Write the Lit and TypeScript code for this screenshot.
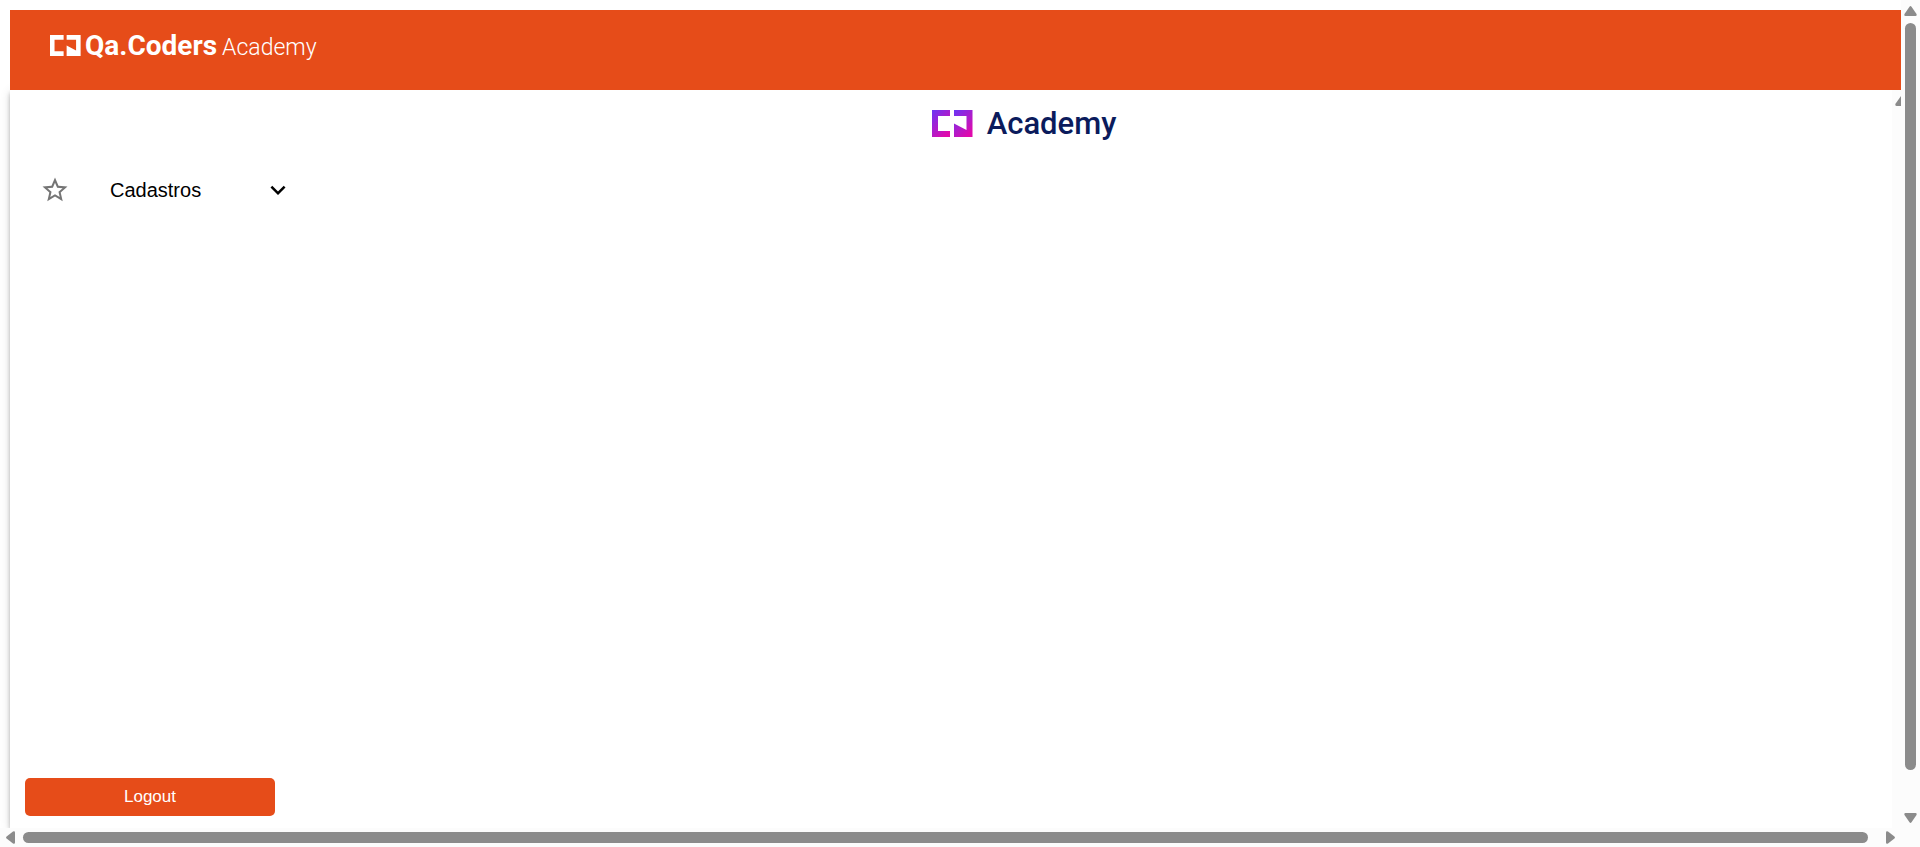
import { LitElement, html, css } from "lit";
import { customElement, state } from "lit/decorators.js";

@customElement("app-root")
export class AppRoot extends LitElement {
  @state() private open = false;

  static styles = css`
    :host {
      display: grid;
      grid-template-columns: minmax(0, 1fr) 19px;
      grid-template-rows: minmax(0, 1fr) 19px;
      height: 100vh;
      background: #fff;
      color: #000;
      font-family: "Liberation Sans", Arial, sans-serif;
    }
    * { box-sizing: border-box; }
    .page {
      display: flex;
      flex-direction: column;
      padding: 10px 0 0 10px;
      overflow: hidden;
    }
    header {
      height: 80px;
      flex: none;
      background: #e64c19;
      position: relative;
      z-index: 1;
      padding: 18px 40px 0;
    }
    .brand {
      display: flex;
      align-items: center;
      height: 34px;
      color: #fff;
      text-decoration: none;
      font-family: Roboto, sans-serif;
      line-height: 32px;
    }
    .brand svg { width: 31px; height: 21px; margin-right: 4px; }
    .name { display: flex; align-items: baseline; gap: 5px; padding-top: 4px; }
    .name strong { font-size: 28px; font-weight: 700; }
    .name span { font-size: 23px; font-weight: 300; }
    .panel {
      flex: 1;
      min-height: 0;
      display: flex;
      box-shadow: 0 2px 4px -1px rgba(0, 0, 0, 0.2), 0 4px 5px 0 rgba(0, 0, 0, 0.14),
        0 1px 10px 0 rgba(0, 0, 0, 0.12);
      background: #fff;
    }
    .content {
      flex: 1;
      min-width: 0;
      display: flex;
      flex-direction: column;
      padding: 13px 15px 12px;
    }
    .academy {
      display: flex;
      align-items: center;
      justify-content: center;
      height: 40px;
      margin-left: 146px;
      font-family: Roboto, sans-serif;
      font-size: 31px;
      font-weight: 500;
      line-height: 36px;
      color: #0b1b5c;
      gap: 14px;
    }
    .academy span { padding-top: 2px; }
    .academy svg { width: 41px; height: 27px; }
    nav { flex: 1; padding: 23px 0 0; }
    .item {
      display: flex;
      align-items: center;
      width: 276px;
      height: 48px;
      padding: 0 8px 0 15px;
      border: 0;
      background: none;
      color: inherit;
      font: 20px/24px "Liberation Sans", Arial, sans-serif;
      text-align: left;
      cursor: pointer;
    }
    .item span { flex: 1; margin-left: 40px; }
    .item svg { flex: none; width: 30px; height: 30px; }
    .star { fill: #757575; }
    .chevron { fill: #000; }
    .logout {
      width: 250px;
      height: 38px;
      border: 0;
      border-radius: 5px;
      background: #e64c19;
      color: #fff;
      font: 17px/20px "Liberation Sans", Arial, sans-serif;
      cursor: pointer;
    }
    .inner-bar {
      width: 9px;
      background: #fcfcfc;
      padding: 6px 0 0 3px;
    }
    .inner-bar svg, .bar svg { display: block; fill: #8b8b8b; flex: none; }
    .bar {
      display: flex;
      align-items: center;
      background: #fcfcfc;
    }
    .vertical { flex-direction: column; padding: 6px 0 5px; gap: 7px; }
    .horizontal { padding: 0 6px; gap: 8px; }
    .track { flex: 1; display: flex; }
    .vertical .track { padding-bottom: 36px; width: 11px; }
    .horizontal .track { padding-right: 10px; height: 11px; }
    .thumb { flex: 1; border-radius: 6px; background: #8b8b8b; }
  `;

  private mark(fill: string) {
    return html`<svg viewBox="0 0 41 27" preserveAspectRatio="none" aria-hidden="true">
      <defs>
        <linearGradient id="l" x1="0" y1="0" x2="0.7" y2="1">
          <stop offset="0" stop-color="#6a35f5" /><stop offset="1" stop-color="#e00aac" />
        </linearGradient>
      </defs>
      <path fill=${fill} d="M0 0H18V6H6V21H18V27H0Z" />
      <path fill=${fill} d="M22 0H40.500V27H22V13.5L34.500 20V6H22Z" />
    </svg>`;
  }

  render() {
    return html`
      <div class="page">
        <header>
          <a class="brand" href="#">${this.mark("#fff")}<span class="name"><strong>Qa.Coders</strong><span>Academy</span></span></a>
        </header>
        <div class="panel">
          <div class="content">
            <div class="academy">${this.mark("url(#l)")}<span>Academy</span></div>
            <nav>
              <button class="item" aria-expanded=${this.open} @click=${() => (this.open = !this.open)}>
                <svg class="star" viewBox="0 0 24 24" aria-hidden="true"><path d="m22 9.240-7.190-.62L12 2 9.190 8.630 2 9.240l5.460 4.730L5.820 21 12 17.270 18.180 21l-1.630-7.030L22 9.240zM12 15.400l-3.760 2.270 1-4.280-3.320-2.880 4.380-.38L12 6.100l1.710 4.040 4.380.38-3.320 2.880 1 4.280L12 15.400z" /></svg>
                <span>Cadastros</span>
                <svg class="chevron" viewBox="0 0 24 24" aria-hidden="true"><path d="M16.590 8.590 12 13.170 7.410 8.590 6 10l6 6 6-6z" /></svg>
              </button>
            </nav>
            <button class="logout">Logout</button>
          </div>
          <div class="inner-bar">
            <svg width="6" height="10" viewBox="0 0 6 10" aria-hidden="true"><path d="M6 0 0.300 8Q0 10 1.500 10H6Z" /></svg>
          </div>
        </div>
      </div>
      <div class="bar vertical">
        <svg width="13" height="10" viewBox="0 0 13 10" aria-hidden="true"><path d="M5.500.7Q6.500-.5 7.500.7L12.500 8Q13.200 10 11.500 10H1.500Q-.2 10 .5 8Z" /></svg>
        <div class="track"><div class="thumb"></div></div>
        <svg width="13" height="10" viewBox="0 0 13 10" aria-hidden="true"><path d="M5.500 9.300Q6.500 10.500 7.500 9.300L12.500 2Q13.200 0 11.500 0H1.500Q-.2 0 .5 2Z" /></svg>
      </div>
      <div class="bar horizontal">
        <svg width="9" height="13" viewBox="0 0 9 13" aria-hidden="true"><path d="M.6 5.500Q-.5 6.500.6 7.500L7 12.500Q9 13.200 9 11.500V1.500Q9-.2 7 .5Z" /></svg>
        <div class="track"><div class="thumb"></div></div>
        <svg width="9" height="13" viewBox="0 0 9 13" aria-hidden="true"><path d="M8.400 5.500Q9.500 6.500 8.400 7.500L2 12.500Q0 13.200 0 11.500V1.500Q0-.2 2 .5Z" /></svg>
      </div>
      <div class="bar"></div>
    `;
  }
}
